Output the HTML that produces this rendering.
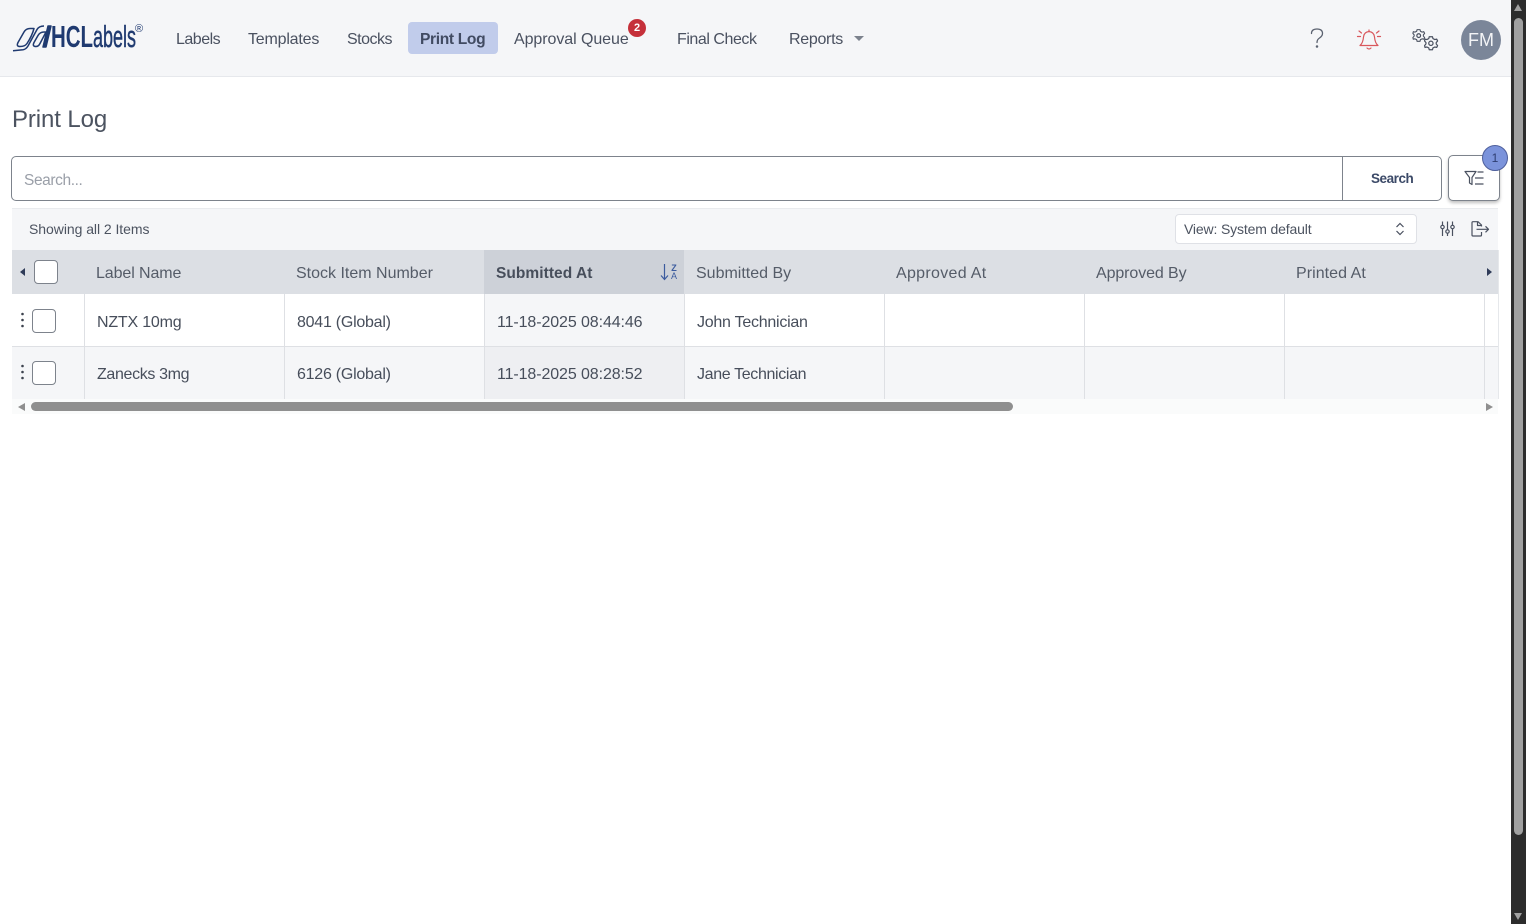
<!DOCTYPE html>
<html><head><meta charset="utf-8"><title>Print Log</title>
<style>
html,body{margin:0;padding:0;width:1526px;height:924px;overflow:hidden;background:#fff}
body{position:relative;font-family:"Liberation Sans","Noto Sans CJK JP",sans-serif;color:#4b5563}
.a{position:absolute}
.t{position:absolute;white-space:nowrap;line-height:20px;font-size:16px}
.n{color:#4a5160;top:30px}
.h{color:#555c68;top:264px}
.c{color:#474e5b;}
.cb{position:absolute;width:22px;height:22px;border:1px solid #7d838c;border-radius:4px;background:#fff}
.v{position:absolute;width:1px;background:#dee0e4}
svg{position:absolute;overflow:visible}
</style></head><body>
<!-- navbar -->
<div class="a" style="left:0;top:0;width:1511px;height:76px;background:#f5f6f8;border-bottom:1px solid #e6e8ec"></div>
<!-- logo -->
<svg style="left:12px;top:24px" width="40" height="28" viewBox="0 0 40 28" fill="none" stroke="#1f3a70" stroke-width="1.500" stroke-linejoin="round">
<path d="M1 26.800L11 25.800Q14 25.300 16 22L25 5.500Q27 2 32 2"/>
<path d="M8 22.500Q4 22.500 6 18.500L12 8Q14 4.500 18 4.500H22Q20 12 15 19.500Q13 22.500 8 22.500Z"/>
<path d="M24 22.500Q20 22.500 22 18.500L26 11.500Q28 8 32 8H34L28 19.500Q26.500 22.500 24 22.500Z"/>
<path d="M31 23L34 23L39 2H36Z" fill="#1f3a70"/>
</svg>
<div class="t" style="left:51px;top:22px;font-size:31px;line-height:30px;font-weight:700;color:#1f3a70;transform:scaleX(.66);transform-origin:0 0">HCL</div>
<div class="t" style="left:93px;top:22px;font-size:31px;line-height:30px;font-weight:400;color:#1f3a70;transform:scaleX(.58);transform-origin:0 0;-webkit-text-stroke:.5px #1f3a70">abels</div>
<div class="t" style="left:135px;top:24px;font-size:11px;line-height:10px;color:#1f3a70">®</div>
<!-- nav -->
<div class="t n" style="left:176px;letter-spacing:-.5px">Labels</div>
<div class="t n" style="left:248px;letter-spacing:-.2px">Templates</div>
<div class="t n" style="left:347px;letter-spacing:-.5px">Stocks</div>
<div class="a" style="left:408px;top:22px;width:90px;height:32px;background:#c1cceb;border-radius:4px"></div>
<div class="t n" style="left:420px;font-weight:700;color:#414b62;font-size:15.600px;letter-spacing:-.35px">Print Log</div>
<div class="t n" style="left:514px;letter-spacing:-.07px">Approval Queue</div>
<div class="a" style="left:628px;top:19px;width:18px;height:18px;border-radius:50%;background:#c5303a;color:#fff;font-size:11px;line-height:18px;text-align:center;font-weight:700">2</div>
<div class="t n" style="left:677px;letter-spacing:-.45px">Final Check</div>
<div class="t n" style="left:789px;letter-spacing:-.3px">Reports</div>
<div class="a" style="left:854px;top:36px;width:0;height:0;border-left:5px solid transparent;border-right:5px solid transparent;border-top:5px solid #7c828d"></div>
<!-- right icons -->
<svg style="left:1300px;top:20px" width="34" height="34" viewBox="1300 20 34 34" fill="none" stroke="#5b6270" stroke-width="1.300" stroke-linecap="round">
<path d="M1311.500 33.500Q1311.500 29 1317 29Q1322.500 29 1322.500 33.500Q1322.500 36 1319.500 38Q1317 39.500 1317 42.500"/><circle cx="1317" cy="46.500" r=".6"/>
</svg>
<svg style="left:1356px;top:27px" width="26" height="26" viewBox="0 0 26 26" fill="none" stroke="#d9575c" stroke-width="1.200" stroke-linecap="round" stroke-linejoin="round">
<path d="M4 18.500Q7 16 7.500 10Q8 5 13 4.500Q18 5 18.500 10Q19 16 22 18.500Z"/><path d="M11 21Q13 23 15 21"/><path d="M13 3V4.500"/><path d="M3 4L5.500 6"/><path d="M1.500 9.500H4.500"/><path d="M23 4L20.500 6"/><path d="M24.500 9.500H21.500"/>
</svg>
<svg style="left:1412px;top:29px" width="27" height="22" viewBox="0 0 29 23" fill="none" stroke="#4a5160" stroke-width="1.300" stroke-linejoin="round">
<path d="M5.500 1.500H9L9.500 3.500L11.500 4.500L13.500 4L14.500 6L13 7.800V9.200L14.500 11L13.500 13L11.500 12.500L9.500 13.500L9 15.500H5.500L5 13.500L3 12.500L1 13L0.500 11L2 9.200V7.800L0.500 6L1 4L3 4.500L5 3.500Z" transform="translate(.5 -1) scale(.9)"/><circle cx="7.200" cy="6.800" r="2"/>
<path d="M18.500 8H22L22.500 10L24.500 11L26.500 10.500L27.500 12.500L26 14.300V15.700L27.500 17.500L26.500 19.500L24.500 19L22.500 20L22 22H18.500L18 20L16 19L14 19.500L13.500 17.500L15 15.700V14.300L13.500 12.500L14 10.500L16 11L18 10Z"/><circle cx="20.300" cy="15" r="2.300"/>
</svg>
<div class="a" style="left:1461px;top:20px;width:40px;height:40px;border-radius:50%;background:#7b8699;color:#f3f4f6;font-size:18px;line-height:40px;text-align:center">FM</div>
<!-- title -->
<div class="t" style="left:12px;top:104px;font-size:24px;line-height:32px;color:#4c5360;letter-spacing:-.1px">Print Log</div>
<!-- search -->
<div class="a" style="left:11px;top:156px;width:1429px;height:43px;border:1px solid #7d838c;border-radius:5px;background:#fff"></div>
<div class="a" style="left:1342px;top:157px;width:1px;height:43px;background:#7d838c"></div>
<div class="t" style="left:24px;top:171px;color:#9a9fa8;font-size:15.500px;letter-spacing:-.4px">Search...</div>
<div class="t" style="left:1371px;top:169px;font-size:13.500px;font-weight:700;color:#3c4a68;letter-spacing:-.45px">Search</div>
<div class="a" style="left:1448px;top:155px;width:50px;height:44px;border:1px solid #7d838c;border-radius:5px;background:#fff;box-shadow:0 2px 3px rgba(0,0,0,.25)"></div>
<svg style="left:1464px;top:170px" width="21" height="16" viewBox="0 0 21 16" fill="none" stroke="#4a5160" stroke-width="1.200" stroke-linejoin="round">
<path d="M1 1.500H12L8 7.500V14.500L5.500 13V7.500Z"/><path d="M13.500 2H19.500M11 8H19.500M11 14H19.500"/>
</svg>
<div class="a" style="left:1482px;top:145px;width:24px;height:24px;border:1px solid #4e5f9c;border-radius:50%;background:#7b93db;color:#2e3d70;font-size:12px;line-height:24px;text-align:center">1</div>
<!-- toolbar -->
<div class="a" style="left:12px;top:208px;width:1486px;height:42px;background:#f5f6f8;border-top:1px solid #e9ebee;box-sizing:border-box"></div>
<div class="t" style="left:29px;top:219px;font-size:14px;color:#4c5360;letter-spacing:-.05px">Showing all 2 Items</div>
<div class="a" style="left:1175px;top:214px;width:240px;height:28px;border:1px solid #dfe1e6;border-radius:4px;background:#fff"></div>
<div class="t" style="left:1184px;top:219px;font-size:14px;color:#4c5360;letter-spacing:-.15px">View: System default</div>
<svg style="left:1395px;top:222px" width="10" height="14" viewBox="0 0 10 14" fill="none" stroke="#4a5160" stroke-width="1.200"><path d="M1.500 5L5 1.500L8.500 5M1.500 9L5 12.500L8.500 9"/></svg>
<svg style="left:1440px;top:221px" width="15" height="16" viewBox="0 0 15 16" fill="none" stroke="#4a5160" stroke-width="1.200">
<path d="M2.500 0.500V15M7.500 0.500V15M12.500 0.500V15"/><circle cx="2.500" cy="6" r="1.700" fill="#f5f6f9"/><circle cx="7.500" cy="10.500" r="1.700" fill="#f5f6f9"/><circle cx="12.500" cy="6" r="1.700" fill="#f5f6f9"/>
</svg>
<svg style="left:1471px;top:221px" width="19" height="16" viewBox="0 0 19 16" fill="none" stroke="#4a5160" stroke-width="1.200" stroke-linejoin="round">
<path d="M10.500 5.500V4L7 0.700H2Q1 0.700 1 1.700V14Q1 15 2 15H9.500Q10.500 15 10.500 14V11"/><path d="M6.500 1V4.500H10.500"/><path d="M5.500 8.300H17.500M14.500 5.300L17.500 8.300L14.500 11.300"/>
</svg>
<!-- header -->
<div class="a" style="left:12px;top:250px;width:1486px;height:44px;background:#dcdfe4"></div>
<div class="a" style="left:484px;top:250px;width:200px;height:44px;background:#cdd1d8"></div>
<div class="a" style="left:20px;top:268px;width:0;height:0;border-top:4px solid transparent;border-bottom:4px solid transparent;border-right:5px solid #2f3b58"></div>
<div class="cb" style="left:34px;top:260px"></div>
<div class="t h" style="left:96px;letter-spacing:-.1px">Label Name</div>
<div class="t h" style="left:296px">Stock Item Number</div>
<div class="t h" style="left:496px;font-weight:700;color:#474e5b;font-size:15.500px;letter-spacing:.05px">Submitted At</div>
<svg style="left:660px;top:263px" width="9" height="18" viewBox="0 0 9 18" fill="none" stroke="#3b5b9e" stroke-width="1.200"><path d="M4.500 1V16M1 12.500L4.500 16.500L8 12.500"/></svg>
<div class="t" style="left:670px;top:263px;font-size:9px;line-height:10px;color:#3b5b9e;font-weight:700;width:8px;text-align:center">Z</div>
<div class="t" style="left:670px;top:271px;font-size:9px;line-height:10px;color:#3b5b9e;width:8px;text-align:center">A</div>
<div class="t h" style="left:696px">Submitted By</div>
<div class="t h" style="left:896px;letter-spacing:.3px">Approved At</div>
<div class="t h" style="left:1096px;letter-spacing:-.1px">Approved By</div>
<div class="t h" style="left:1296px;letter-spacing:.05px">Printed At</div>
<div class="a" style="left:1487px;top:268px;width:0;height:0;border-top:4px solid transparent;border-bottom:4px solid transparent;border-left:5px solid #2f3b58"></div>
<!-- rows -->
<div class="a" style="left:12px;top:294px;width:1486px;height:52px;background:#fff;border-bottom:1px solid #dee0e4"></div>
<div class="a" style="left:12px;top:347px;width:1486px;height:52px;background:#f5f6f8"></div>
<div class="a" style="left:484px;top:294px;width:200px;height:52px;background:#f5f6f8"></div>
<div class="a" style="left:484px;top:347px;width:200px;height:52px;background:#eeeff2"></div>
<div class="a" style="left:484px;top:346px;width:200px;height:1px;background:#dee0e4"></div>
<div class="v" style="left:84px;top:294px;height:105px"></div>
<div class="v" style="left:284px;top:294px;height:105px"></div>
<div class="v" style="left:484px;top:294px;height:105px"></div>
<div class="v" style="left:684px;top:294px;height:105px"></div>
<div class="v" style="left:884px;top:294px;height:105px"></div>
<div class="v" style="left:1084px;top:294px;height:105px"></div>
<div class="v" style="left:1284px;top:294px;height:105px"></div>
<div class="v" style="left:1484px;top:294px;height:105px"></div>
<div class="v" style="left:1498px;top:250px;height:149px;background:#e6e8eb"></div>
<svg style="left:20px;top:312px" width="5" height="68" fill="#3c424e"><circle cx="2.500" cy="2" r="1.300"/><circle cx="2.500" cy="8" r="1.300"/><circle cx="2.500" cy="14" r="1.300"/><circle cx="2.500" cy="54" r="1.300"/><circle cx="2.500" cy="60" r="1.300"/><circle cx="2.500" cy="66" r="1.300"/></svg>
<div class="cb" style="left:32px;top:309px"></div>
<div class="cb" style="left:32px;top:361px"></div>
<div class="t c" style="left:97px;top:313px;letter-spacing:-.2px">NZTX 10mg</div>
<div class="t c" style="left:297px;top:313px;letter-spacing:-.25px">8041 (Global)</div>
<div class="t c" style="left:497px;top:313px;letter-spacing:-.1px">11-18-2025 08:44:46</div>
<div class="t c" style="left:697px;top:313px;letter-spacing:-.25px">John Technician</div>
<div class="t c" style="left:97px;top:365px;letter-spacing:-.35px">Zanecks 3mg</div>
<div class="t c" style="left:297px;top:365px;letter-spacing:-.25px">6126 (Global)</div>
<div class="t c" style="left:497px;top:365px;letter-spacing:-.1px">11-18-2025 08:28:52</div>
<div class="t c" style="left:697px;top:365px;letter-spacing:-.35px">Jane Technician</div>
<!-- h scrollbar -->
<div class="a" style="left:12px;top:399px;width:1486px;height:15px;background:#fafbfb"></div>
<div class="a" style="left:31px;top:402px;width:982px;height:9px;border-radius:5px;background:#8f8f8f"></div>
<div class="a" style="left:18px;top:403px;width:0;height:0;border-top:4px solid transparent;border-bottom:4px solid transparent;border-right:7px solid #8f8f8f"></div>
<div class="a" style="left:1486px;top:403px;width:0;height:0;border-top:4px solid transparent;border-bottom:4px solid transparent;border-left:7px solid #8f8f8f"></div>
<!-- v scrollbar -->
<div class="a" style="left:1511px;top:0;width:15px;height:924px;background:#2c2c2c"></div>
<div class="a" style="left:1514px;top:18px;width:9px;height:817px;border-radius:5px;background:#a0a0a0"></div>
<div class="a" style="left:1514px;top:4px;width:0;height:0;border-left:4.500px solid transparent;border-right:4.500px solid transparent;border-bottom:7px solid #a0a0a0"></div>
<div class="a" style="left:1514px;top:913px;width:0;height:0;border-left:4.500px solid transparent;border-right:4.500px solid transparent;border-top:7px solid #a0a0a0"></div>
</body></html>
